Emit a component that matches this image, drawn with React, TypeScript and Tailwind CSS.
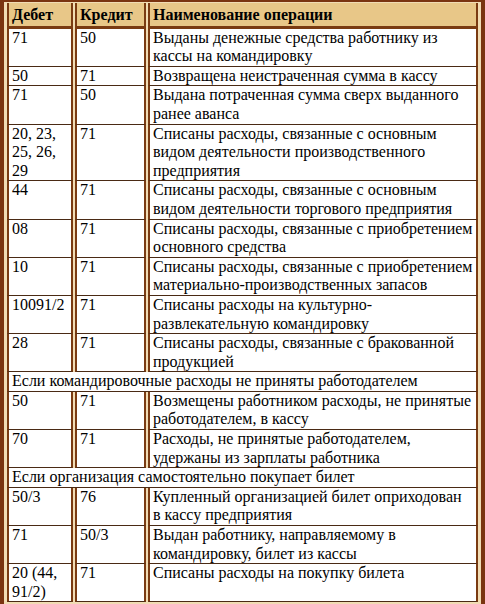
type Row = { d: string; c: string; t: string } | { section: string };

const rows: Row[] = [
  { d: "71", c: "50", t: "Выданы денежные средства работнику из кассы на командировку" },
  { d: "50", c: "71", t: "Возвращена неистраченная сумма в кассу" },
  { d: "71", c: "50", t: "Выдана потраченная сумма сверх выданного ранее аванса" },
  {
    d: "20, 23, 25, 26, 29",
    c: "71",
    t: "Списаны расходы, связанные с основным видом деятельности производственного предприятия",
  },
  { d: "44", c: "71", t: "Списаны расходы, связанные с основным видом деятельности торгового предприятия" },
  { d: "08", c: "71", t: "Списаны расходы, связанные с приобретением основного средства" },
  { d: "10", c: "71", t: "Списаны расходы, связанные с приобретением материально-производственных запасов" },
  { d: "10091/2", c: "71", t: "Списаны расходы на культурно-развлекательную командировку" },
  { d: "28", c: "71", t: "Списаны расходы, связанные с бракованной продукцией" },
  { section: "Если командировочные расходы не приняты работодателем" },
  { d: "50", c: "71", t: "Возмещены работником расходы, не принятые работодателем, в кассу" },
  { d: "70", c: "71", t: "Расходы, не принятые работодателем, удержаны из зарплаты работника" },
  { section: "Если организация самостоятельно покупает билет" },
  { d: "50/3", c: "76", t: "Купленный организацией билет оприходован в кассу предприятия" },
  { d: "71", c: "50/3", t: "Выдан работнику, направляемому в командировку, билет из кассы" },
  { d: "20 (44, 91/2)", c: "71", t: "Списаны расходы на покупку билета" },
];

const cell =
  "border-x-2 border-b border-x-[#7a3b12] border-b-[#4a2a14] bg-white px-[3px] align-top font-['Liberation_Serif'] text-[16px] leading-[18.6px] font-normal";

export default function App() {
  return (
    <div className="h-[604px] w-[485px] bg-white">
      <div className="border-x-[4px] border-t-[2px] border-b-[4px] border-[#7a3410] bg-[#f1dcb4] px-[1px] pt-[1px] pb-[2px] font-['Liberation_Serif'] text-[16px] leading-[18.6px] text-black">
        <table className="w-full table-fixed border-separate border-spacing-x-[2px] border-spacing-y-0 font-['Liberation_Serif'] text-[16px] leading-[18.6px]">
          <colgroup>
            <col className="w-[66px]" />
            <col className="w-[71px]" />
            <col />
          </colgroup>
          <thead>
            <tr>
              {["Дебет", "Кредит", "Наименование операции"].map((h) => (
                <th
                  key={h}
                  className="border-x-2 border-b-[3px] border-x-[#7a3b12] border-b-[#7a3b12] bg-[#e8c788] px-[3px] pt-[3px] pb-[1px] text-left font-['Liberation_Serif'] text-[16px] leading-[18.6px] font-bold"
                >
                  {h}
                </th>
              ))}
            </tr>
          </thead>
          <tbody>
            {rows.map((r, i) =>
              "section" in r ? (
                <tr key={i}>
                  <td colSpan={3} className={cell}>
                    {r.section}
                  </td>
                </tr>
              ) : (
                <tr key={i}>
                  <td className={cell}>{r.d}</td>
                  <td className={cell}>{r.c}</td>
                  <td className={cell}>{r.t}</td>
                </tr>
              ),
            )}
          </tbody>
        </table>
      </div>
    </div>
  );
}
